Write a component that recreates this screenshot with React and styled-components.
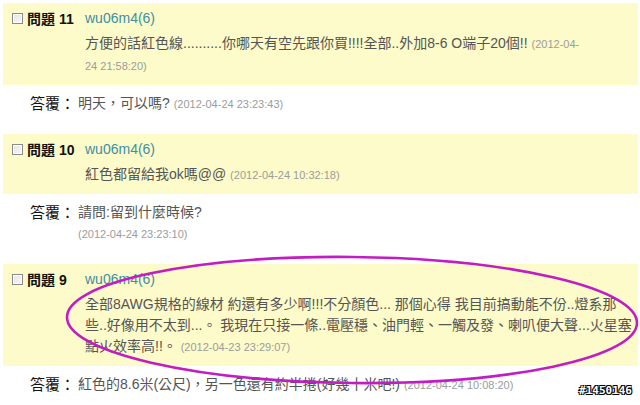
import styled, { createGlobalStyle } from 'styled-components';

const GlobalStyle = createGlobalStyle`
  html, body {
    margin: 0;
    padding: 0;
    background: #fff;
  }
  body {
    font-family: "Liberation Sans", "Noto Sans CJK TC", Arial, sans-serif;
  }
`;

const Page = styled.div`
  position: relative;
  width: 640px;
  height: 405px;
  overflow: hidden;
  padding: 3px 2px 0 3px;
  box-sizing: border-box;
`;

const Question = styled.div`
  display: grid;
  grid-template-columns: 73px 1fr;
  background: #fcfbc9;
  padding: 4px 0 8px 9px;
`;

const Label = styled.div`
  display: flex;
  align-items: center;
  height: 22px;
  gap: 4px;
`;

const Checkbox = styled.span`
  width: 9px;
  height: 9px;
  border: 1px solid #8a8a8a;
  background: linear-gradient(135deg, #e4e4e4, #f8f8f8);
  box-shadow: inset 0 0 0 1px #fff;
`;

const Title = styled.span`
  font-weight: bold;
  font-size: 14px;
  color: #111;
  white-space: nowrap;
`;

const Author = styled.div`
  height: 22px;
  line-height: 22px;
  font-size: 14px;
  color: #3d8fa6;
`;

const Content = styled.div`
  margin-top: 4px;
  font-size: 14px;
  line-height: 21px;
  color: #555;
  white-space: nowrap;
`;

const Stamp = styled.span`
  font-size: 11px;
  color: #9c9c9c;
`;

const Reply = styled.div`
  display: grid;
  grid-template-columns: 48px 1fr;
  padding: ${p => (p.$last ? '8px 0 0 27px' : '8px 0 19px 27px')};
  font-size: 14px;
  line-height: 21px;
`;

const ReplyLabel = styled.span`
  color: #111;
  font-size: 15px;
`;

const ReplyText = styled.div`
  color: #555;
  white-space: nowrap;
`;

const Circle = styled.svg`
  position: absolute;
  left: 0;
  top: 0;
  pointer-events: none;
`;

const Watermark = styled.div`
  position: absolute;
  right: 8px;
  bottom: 8px;
  font-family: "DejaVu Sans Mono", monospace;
  font-weight: bold;
  font-size: 11px;
  color: #fff;
  text-shadow: -1px -1px 0 #000, 1px -1px 0 #000, -1px 1px 0 #000, 1px 1px 0 #000;
`;

const QuestionBlock = ({ no, children }) => (
  <Question>
    <Label>
      <Checkbox />
      <Title>問題 {no}</Title>
    </Label>
    <div>
      <Author>wu06m4(6)</Author>
      <Content>{children}</Content>
    </div>
  </Question>
);

export default function App() {
  return (
    <>
      <GlobalStyle />
      <Page>
        <QuestionBlock no="11">
          方便的話紅色線..........你哪天有空先跟你買!!!!全部..外加8-6 O端子20個!! <Stamp>(2012-04-</Stamp>
          <br />
          <Stamp>24 21:58:20)</Stamp>
        </QuestionBlock>
        <Reply>
          <ReplyLabel>答覆：</ReplyLabel>
          <ReplyText>
            明天，可以嗎? <Stamp>(2012-04-24 23:23:43)</Stamp>
          </ReplyText>
        </Reply>

        <QuestionBlock no="10">
          紅色都留給我ok嗎@@ <Stamp>(2012-04-24 10:32:18)</Stamp>
        </QuestionBlock>
        <Reply>
          <ReplyLabel>答覆：</ReplyLabel>
          <ReplyText>
            請問:留到什麼時候?
            <br />
            <Stamp>(2012-04-24 23:23:10)</Stamp>
          </ReplyText>
        </Reply>

        <QuestionBlock no="9">
          全部8AWG規格的線材 約還有多少啊!!!不分顏色... 那個心得 我目前搞動能不份..燈系那
          <br />
          些..好像用不太到...。 我現在只接一條..電壓穩、油門輕、一觸及發、喇叭便大聲...火星塞
          <br />
          點火效率高!!。 <Stamp>(2012-04-23 23:29:07)</Stamp>
        </QuestionBlock>
        <Reply $last>
          <ReplyLabel>答覆：</ReplyLabel>
          <ReplyText>
            紅色的8.6米(公尺)，另一色還有約半捲(好幾十米吧!) <Stamp>(2012-04-24 10:08:20)</Stamp>
          </ReplyText>
        </Reply>

        <Circle width="640" height="405" viewBox="0 0 640 405">
          <ellipse
            cx="352"
            cy="320"
            rx="285"
            ry="63"
            transform="rotate(0.6 352 320)"
            fill="none"
            stroke="#c21cc4"
            strokeWidth="2.6"
          />
        </Circle>
        <Watermark>#1450146</Watermark>
      </Page>
    </>
  );
}
